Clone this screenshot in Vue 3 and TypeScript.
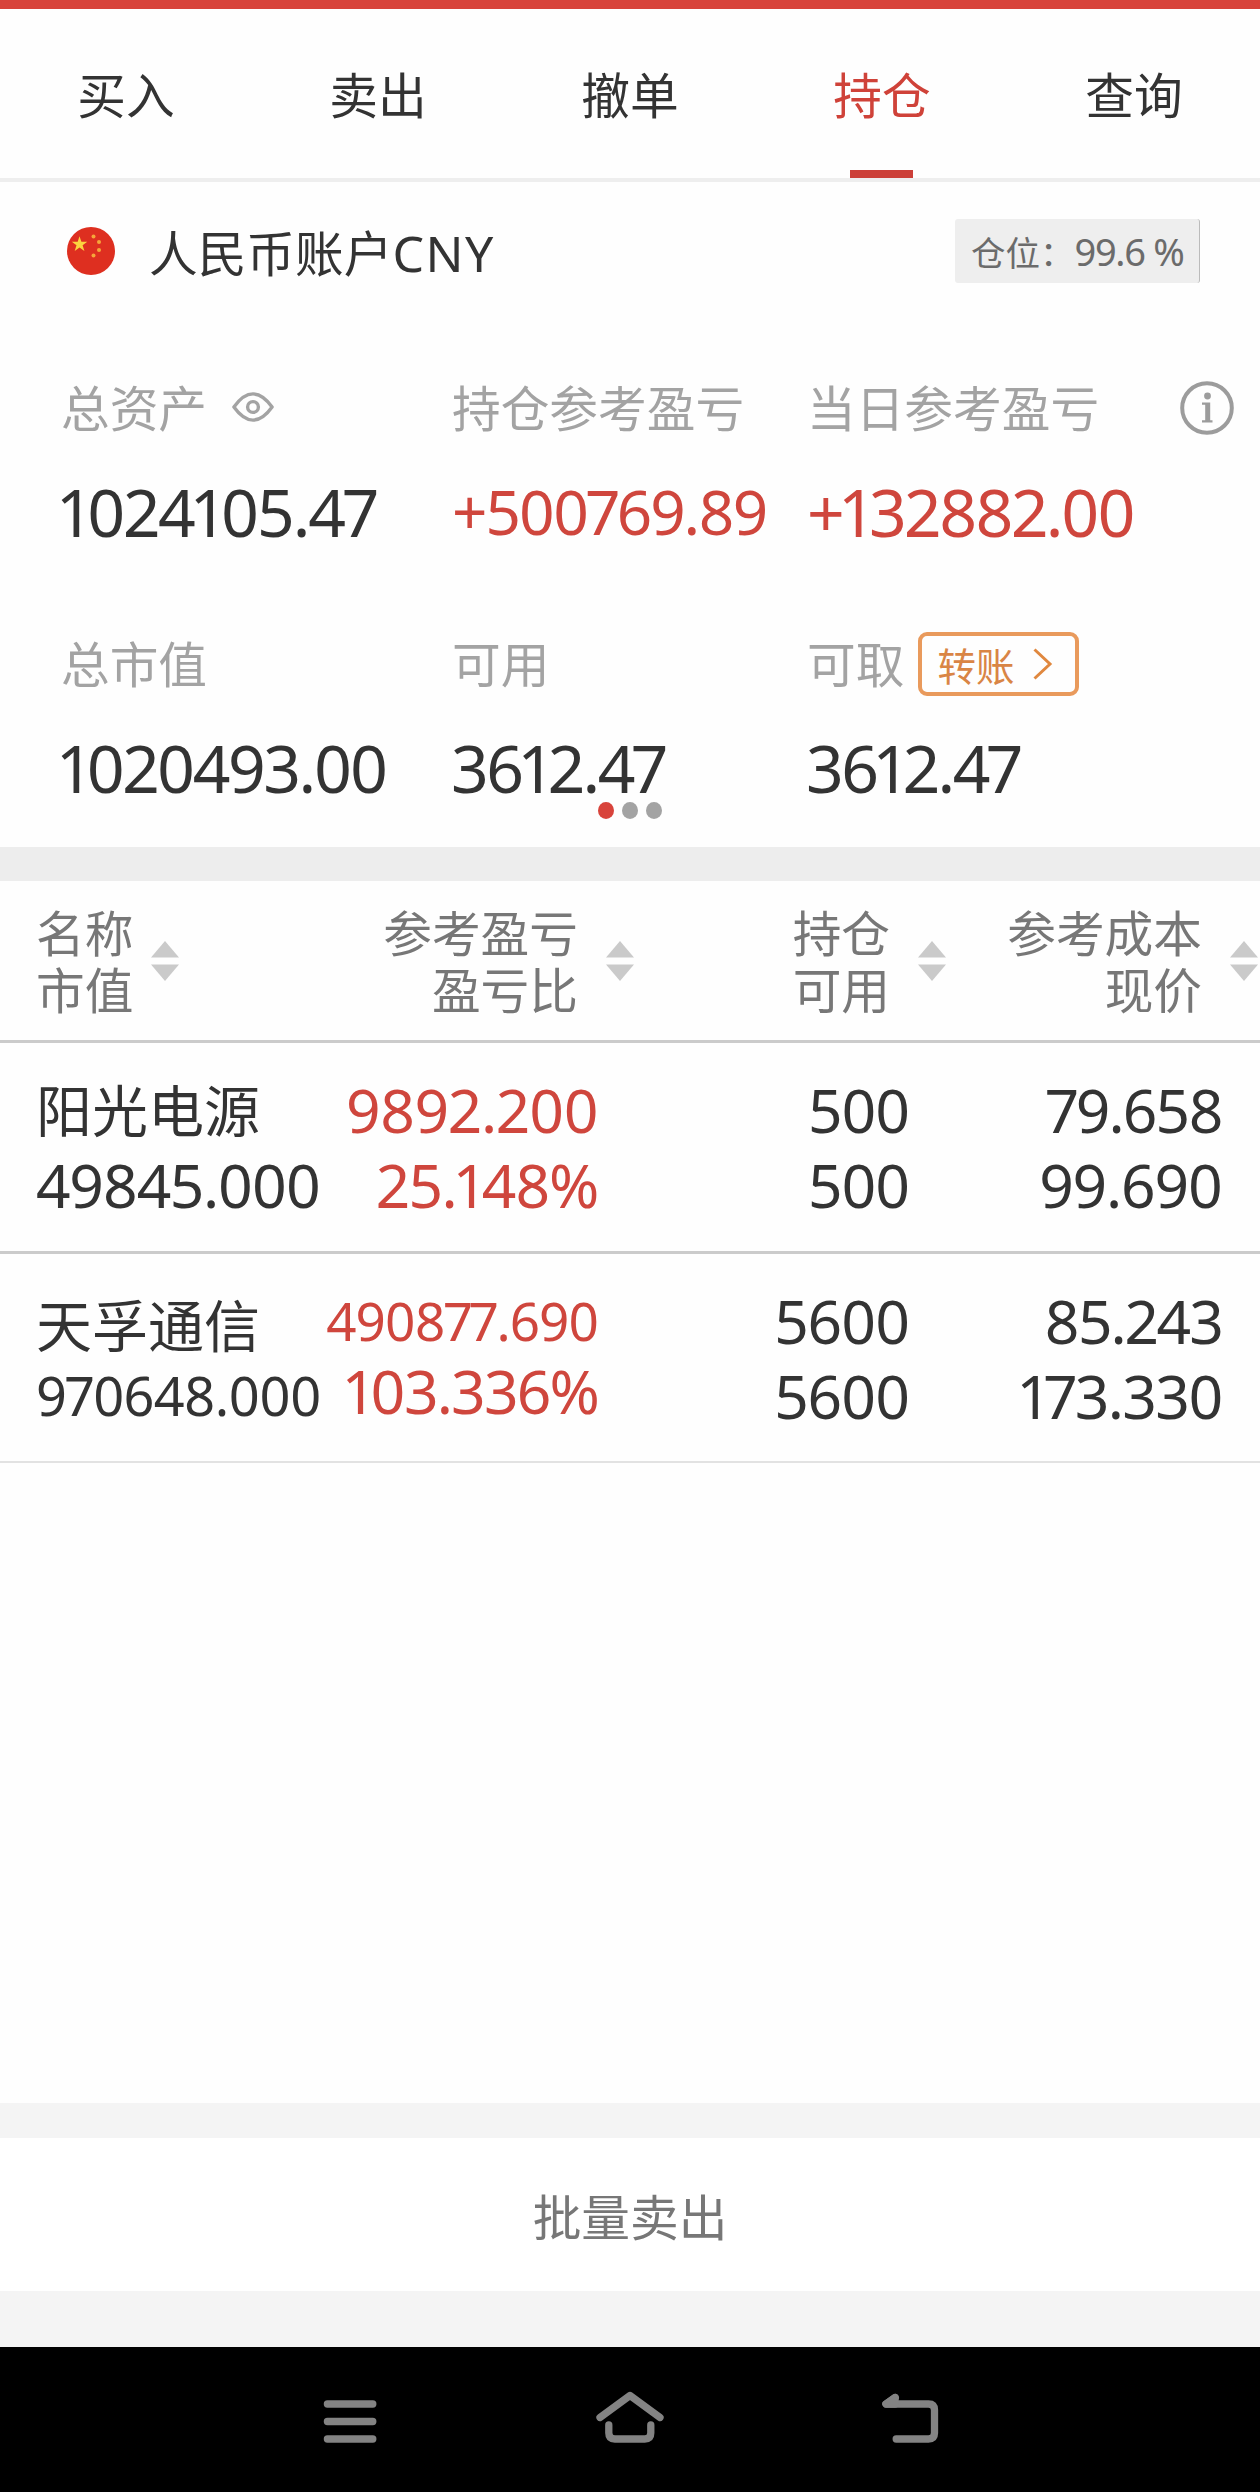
<script setup lang="ts">
import { ref } from 'vue'

interface Figure {
  text: string
  size: number
  tracking: number
}

interface Holding {
  name: string
  marketValue: Figure
  profit: Figure
  ratio: Figure
  amount: Figure
  available: Figure
  cost: Figure
  price: Figure
}

const fig = (text: string, size: number, tracking: number): Figure => ({ text, size, tracking })
const figStyle = (f: Figure) => ({ fontSize: `${f.size}px`, letterSpacing: `${f.tracking}px` })

const tabs = ['买入', '卖出', '撤单', '持仓', '查询']
const activeTab = ref('持仓')

const totalAssets = fig('1024105.47', 66, -2.1)
const holdingProfit = fig('+500769.89', 62, -2.05)
const dayProfit = fig('+132882.00', 66, -2.4)
const marketTotal = fig('1020493.00', 66, -2.5)
const usable = fig('3612.47', 66, -2.45)

const columns = ['名称\n市值', '参考盈亏\n盈亏比', '持仓\n可用', '参考成本\n现价']

const holdings: Holding[] = [
  {
    name: '阳光电源',
    marketValue: fig('49845.000', 60.5, -1.4),
    profit: fig('9892.200', 60.5, -0.85),
    ratio: fig('25.148%', 60.5, -1.4),
    amount: fig('500', 60.5, -1.4),
    available: fig('500', 60.5, -1.4),
    cost: fig('79.658', 60.5, -1.9),
    price: fig('99.690', 60.5, -1.2),
  },
  {
    name: '天孚通信',
    marketValue: fig('970648.000', 54, -0.8),
    profit: fig('490877.690', 53, -1.1),
    ratio: fig('103.336%', 60.5, -1.8),
    amount: fig('5600', 60.5, -1.3),
    available: fig('5600', 60.5, -1.3),
    cost: fig('85.243', 60.5, -1.9),
    price: fig('173.330', 60.5, -1.6),
  },
]
</script>

<template>
  <div class="screen">
    <div class="status-strip"></div>

    <nav class="tabs">
      <button v-for="t in tabs" :key="t" class="tab" :class="{ active: t === activeTab }" @click="activeTab = t">
        {{ t }}
      </button>
    </nav>

    <section class="account">
      <div class="account-head">
        <svg class="flag" viewBox="0 0 48 48">
          <circle cx="24" cy="24" r="24" fill="#de2f20" />
          <path fill="#fbd43f" d="M12.5 9.200l1.900 5.600h5.900l-4.700 3.500 1.800 5.600-4.900-3.500-4.800 3.500 1.800-5.600-4.700-3.500h5.900z" />
          <g fill="#f5a63a">
            <circle cx="26.5" cy="9.500" r="2" />
            <circle cx="32" cy="15" r="2" />
            <circle cx="32" cy="23" r="2" />
            <circle cx="26.5" cy="28.500" r="2" />
          </g>
        </svg>
        <div class="account-name">人民币账户<span class="latin">CNY</span></div>
        <div class="position-badge">仓位：<span class="latin">99.6 %</span></div>
      </div>

      <div class="summary">
        <div class="stat">
          <div class="label">
            总资产
            <svg class="eye" viewBox="0 0 42 30" fill="none" stroke="#a3a3a3" stroke-width="3.4">
              <path d="M1.900 15C8 6.500 14 1.900 21 1.900S34 6.500 40.100 15C34 23.500 28 28.100 21 28.100S8 23.500 1.900 15z" stroke-linejoin="round" />
              <circle cx="21" cy="15" r="5.400" />
            </svg>
          </div>
          <div class="value" :style="figStyle(totalAssets)">{{ totalAssets.text }}</div>
        </div>
        <div class="stat">
          <div class="label">持仓参考盈亏</div>
          <div class="value up" :style="figStyle(holdingProfit)">{{ holdingProfit.text }}</div>
        </div>
        <div class="stat">
          <div class="label">
            当日参考盈亏
            <svg class="info" viewBox="0 0 54 54">
              <circle cx="27" cy="27" r="24.800" fill="none" stroke="#9c9c9c" stroke-width="4" />
              <circle cx="27.500" cy="15" r="3.400" fill="#9c9c9c" />
              <path d="M22 21.500h8.200v17.700h2.300v2.300H22v-2.300h3.200V23.800H22z" fill="#9c9c9c" />
            </svg>
          </div>
          <div class="value up" :style="figStyle(dayProfit)">{{ dayProfit.text }}</div>
        </div>
        <div class="stat">
          <div class="label">总市值</div>
          <div class="value" :style="figStyle(marketTotal)">{{ marketTotal.text }}</div>
        </div>
        <div class="stat">
          <div class="label">可用</div>
          <div class="value" :style="figStyle(usable)">{{ usable.text }}</div>
        </div>
        <div class="stat">
          <div class="label">
            可取
            <button class="transfer">
              转账
              <svg viewBox="0 0 20 32" fill="none" stroke="#e0883f" stroke-width="3">
                <path d="M1.500 1.500L17 16 1.500 30.500" />
              </svg>
            </button>
          </div>
          <div class="value" :style="figStyle(usable)">{{ usable.text }}</div>
        </div>
      </div>

      <div class="pager"><i class="on"></i><i></i><i></i></div>
    </section>

    <div class="band"></div>

    <div class="table-head">
      <div v-for="c in columns" :key="c" class="head-cell">
        <div class="head-text">{{ c }}</div>
        <svg class="sort" viewBox="0 0 28 40" fill="#cacaca">
          <path d="M14 0l14 16.500H0z" />
          <path d="M0 23.500h28L14 40z" />
        </svg>
      </div>
    </div>

    <div class="rows">
      <div v-for="h in holdings" :key="h.name" class="row">
        <div class="cell">
          <div class="name">{{ h.name }}</div>
          <div class="num" :style="figStyle(h.marketValue)">{{ h.marketValue.text }}</div>
        </div>
        <div class="cell up">
          <div class="num" :style="figStyle(h.profit)">{{ h.profit.text }}</div>
          <div class="num ratio" :style="figStyle(h.ratio)">{{ h.ratio.text }}</div>
        </div>
        <div class="cell">
          <div class="num" :style="figStyle(h.amount)">{{ h.amount.text }}</div>
          <div class="num" :style="figStyle(h.available)">{{ h.available.text }}</div>
        </div>
        <div class="cell">
          <div class="num" :style="figStyle(h.cost)">{{ h.cost.text }}</div>
          <div class="num" :style="figStyle(h.price)">{{ h.price.text }}</div>
        </div>
      </div>
    </div>

    <div class="band light"></div>
    <button class="batch-sell">批量卖出</button>
    <div class="band light tall"></div>

    <div class="navbar">
      <svg class="nav-icon" viewBox="0 0 72 60">
        <path d="M13.400 22h45.400M13.400 39.500h45.400M13.400 57h45.400" />
      </svg>
      <svg class="nav-icon" viewBox="0 0 72 60">
        <path d="M6 35.500L36 13.500 66 35.500" />
        <path d="M14.800 43v8q0 6 6 6h30q6 0 6-6v-8" />
      </svg>
      <svg class="nav-icon" viewBox="0 0 72 60">
        <path d="M21.300 15.500L12 22H54.500q6 0 6 6v23q0 6-6 6H22.200" />
        <path d="M21 15.500L12 22H21z" fill="#838383" />
      </svg>
    </div>
  </div>
</template>

<style>
body {
  margin: 0;
}
</style>

<style scoped>
.screen {
  width: 1260px;
  height: 2492px;
  display: flex;
  flex-direction: column;
  background: #fefefe;
  color: #333;
  font-family: 'Noto Sans CJK SC', sans-serif;
  font-size: 48.7px;
  overflow: hidden;
}

.screen > * {
  flex: none;
}

button {
  border: 0;
  padding: 0;
  background: none;
  font: inherit;
  color: inherit;
}

.latin,
.value,
.num {
  font-family: 'Noto Sans', 'Noto Sans CJK SC', sans-serif;
  font-variant-numeric: proportional-nums;
  white-space: nowrap;
}

.status-strip {
  height: 9px;
  background: #d8433b;
}

.tabs {
  display: flex;
  height: 169px;
  border-bottom: 4px solid #eee;
}

.tab {
  position: relative;
  flex: 1;
  padding-top: 54px;
  display: flex;
  justify-content: center;
  line-height: 60px;
}

.tab.active {
  color: #cf4239;
}

.tab.active::after {
  content: '';
  position: absolute;
  left: 94px;
  bottom: 0;
  width: 63px;
  height: 8px;
  background: #cc3f38;
}

.account {
  position: relative;
  box-sizing: border-box;
  height: 665px;
  padding: 37px 26px 0 60px;
}

.account-head {
  display: flex;
  align-items: center;
  height: 64px;
  padding: 0 34px 0 7px;
}

.flag {
  width: 48px;
  height: 48px;
}

.account-name {
  margin: 2px 0 0 34px;
  line-height: 60px;
}

.account-name .latin {
  font-size: 50px;
  letter-spacing: 1.5px;
}

.position-badge {
  margin-left: auto;
  box-sizing: border-box;
  width: 245px;
  height: 64px;
  padding-left: 16px;
  border-right: 1px solid #bbb;
  border-radius: 3px;
  background: #eee;
  color: #6b6b6b;
  font-size: 34.5px;
  line-height: 65px;
  white-space: nowrap;
}

.position-badge .latin {
  font-size: 38px;
  letter-spacing: -1.3px;
}

.summary {
  display: grid;
  grid-template-columns: 391px 355px 1fr;
  row-gap: 81px;
  margin-top: 93px;
}

.label {
  display: flex;
  align-items: center;
  height: 60px;
  padding-left: 1px;
  line-height: 64px;
  color: #a3a3a3;
}

.eye {
  width: 42px;
  height: 30px;
  margin: 2px 0 0 25px;
}

.info {
  width: 54px;
  height: 54px;
  margin: 3px 0 0 auto;
}

.value {
  margin-top: 35px;
  height: 80px;
  line-height: 80px;
}

.stat:nth-child(2) .value,
.stat:nth-child(3) .value {
  margin-left: 1px;
}

.up {
  color: #cf463d;
}

.transfer {
  box-sizing: border-box;
  width: 161px;
  height: 64px;
  margin: 4px 0 0 14px;
  padding: 0 22px 0 15px;
  border: 4px solid #e99a5c;
  border-radius: 9px;
  display: flex;
  align-items: center;
  justify-content: space-between;
  color: #d98545;
  font-size: 38.5px;
  line-height: 50px;
}

.transfer svg {
  width: 20px;
  height: 32px;
}

.pager {
  position: absolute;
  left: 598px;
  top: 620px;
  display: flex;
  gap: 8px;
}

.pager i {
  width: 16px;
  height: 17px;
  border-radius: 50%;
  background: #a3a3a3;
}

.pager .on {
  background: #d8433b;
}

.band {
  height: 34px;
  background: #ededed;
}

.band.light {
  height: 35px;
  background: #f4f4f4;
}

.band.light.tall {
  height: 56px;
}

.table-head {
  box-sizing: border-box;
  display: grid;
  grid-template-columns: 264px 334px 312px 312px;
  height: 162px;
  padding: 22px 0 0 36px;
  border-bottom: 3px solid #cbcbcb;
  color: #777;
  line-height: 57px;
}

.head-cell {
  display: flex;
  align-items: flex-start;
  justify-content: flex-end;
  gap: 28px;
  text-align: right;
}

.head-cell:first-child {
  justify-content: flex-start;
  gap: 18px;
  text-align: left;
}

.head-text {
  white-space: pre-line;
}

.sort {
  width: 28px;
  height: 40px;
  margin-top: 38px;
}

.rows {
  height: 1060px;
}

.row {
  box-sizing: border-box;
  display: grid;
  grid-template-columns: 281px 281px 311px 313px;
  height: 211px;
  padding: 29px 0 0 36px;
  border-bottom: 3px solid #cbcbcb;
}

.row:last-child {
  height: 209px;
  border-bottom: 2px solid #e2e2e2;
}

.name {
  height: 75px;
  font-size: 56px;
  line-height: 71px;
}

.row:last-child .name {
  line-height: 79px;
}

.num {
  height: 75px;
  line-height: 75px;
}

.row:last-child .ratio {
  margin-top: -5px;
}

.cell {
  text-align: right;
}

.cell:first-child {
  text-align: left;
}

.batch-sell {
  height: 153px;
  line-height: 152px;
  color: #777;
  background: #fff;
}

.navbar {
  display: flex;
  justify-content: space-between;
  box-sizing: border-box;
  height: 145px;
  padding: 35px 314px 0;
  background: #000;
}

.nav-icon {
  width: 72px;
  height: 60px;
  overflow: visible;
  fill: none;
  stroke: #838383;
  stroke-width: 7.3;
  stroke-linecap: round;
  stroke-linejoin: round;
}
</style>
